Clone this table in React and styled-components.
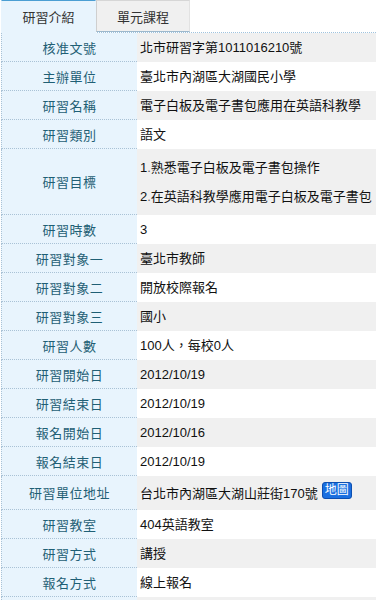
import React from "react";
import styled, { createGlobalStyle } from "styled-components";

const GlobalStyle = createGlobalStyle`
  * { box-sizing: border-box; margin: 0; padding: 0; }
  body {
    background: #ffffff;
    font-family: "Liberation Sans", "Noto Sans CJK TC", sans-serif;
    font-size: 13px;
    color: #111;
  }
`;

const Page = styled.div`
  width: 376px;
  padding-left: 1px;
`;

const Tabs = styled.div`
  display: flex;
  height: 33px;
  border-bottom: 1px dotted #9fc3de;
`;

const Tab = styled.div`
  width: ${(p) => (p.$active ? "95px" : "94px")};
  display: flex;
  align-items: center;
  justify-content: center;
  font-size: 13px;
  color: #333;
  background: ${(p) => (p.$active ? "#e8f4fd" : "#f0f0f0")};
  border-top: 1px solid ${(p) => (p.$active ? "#4a9ed3" : "#d6d6d6")};
  border-left: 1px solid ${(p) => (p.$active ? "#e8f4fd" : "#cfcfcf")};
  border-right: 1px solid ${(p) => (p.$active ? "#e8f4fd" : "#e2e2e2")};
  margin-bottom: ${(p) => (p.$active ? "-1px" : "0")};
  border-bottom: ${(p) => (p.$active ? "1px solid #e8f4fd" : "1px solid #9db8cc")};
`;

const Table = styled.div`
  display: flex;
  flex-direction: column;
`;

const Row = styled.div`
  display: flex;
  min-height: ${(p) => (p.$tall ? "34px" : "29px")};
`;

const Label = styled.div`
  width: 136px;
  flex: none;
  display: flex;
  align-items: center;
  justify-content: center;
  background: #e8f4fd;
  color: #1f5f75;
  border-left: 1px dotted #a9c2d6;
  border-bottom: 1px dotted #a9c2d6;
  letter-spacing: 0.5px;
`;

const Value = styled.div`
  flex: 1;
  display: flex;
  flex-direction: column;
  justify-content: center;
  padding: ${(p) => (p.$list ? "4px 3px" : "0 3px")};
  background: ${(p) => (p.$shade ? "#f0f0f0" : "#ffffff")};
  white-space: nowrap;
  line-height: 17px;
`;

const Line = styled.div`
  padding: 6px 0;
  span { color: #666; }
`;

const Inline = styled.div`
  display: flex;
  align-items: center;
  gap: 4px;
`;

const MapBadge = styled.span`
  display: inline-block;
  background: #1a6fe0;
  color: #fff;
  font-size: 12px;
  line-height: 15px;
  padding: 0 2px;
  border-radius: 3px;
  border: 1px solid #0d4fb0;
  margin-top: -6px;
`;

const rows = [
  ["核准文號", "北市研習字第1011016210號"],
  ["主辦單位", "臺北市內湖區大湖國民小學"],
  ["研習名稱", "電子白板及電子書包應用在英語科教學"],
  ["研習類別", "語文"],
  ["研習目標", null, ["熟悉電子白板及電子書包操作", "在英語科教學應用電子白板及電子書包"]],
  ["研習時數", "3"],
  ["研習對象一", "臺北市教師"],
  ["研習對象二", "開放校際報名"],
  ["研習對象三", "國小"],
  ["研習人數", "100人，每校0人"],
  ["研習開始日", "2012/10/19"],
  ["研習結束日", "2012/10/19"],
  ["報名開始日", "2012/10/16"],
  ["報名結束日", "2012/10/19"],
  ["研習單位地址", "台北市內湖區大湖山莊街170號", null, true],
  ["研習教室", "404英語教室"],
  ["研習方式", "講授"],
  ["報名方式", "線上報名"],
  ["", ""],
];

export default function App() {
  return (
    <>
      <GlobalStyle />
      <Page>
        <Tabs>
          <Tab $active>研習介紹</Tab>
          <Tab>單元課程</Tab>
        </Tabs>
        <Table>
          {rows.map(([label, value, list, map], i) => (
            <Row key={i} $tall={map}>
              <Label>{label}</Label>
              <Value $shade={i % 2 === 0} $list={!!list}>
                {list ? (
                  list.map((t, j) => (
                    <Line key={j}>
                      {j + 1}<span>.</span>{t}
                    </Line>
                  ))
                ) : map ? (
                  <Inline>
                    {value}
                    <MapBadge>地圖</MapBadge>
                  </Inline>
                ) : (
                  value
                )}
              </Value>
            </Row>
          ))}
        </Table>
      </Page>
    </>
  );
}
